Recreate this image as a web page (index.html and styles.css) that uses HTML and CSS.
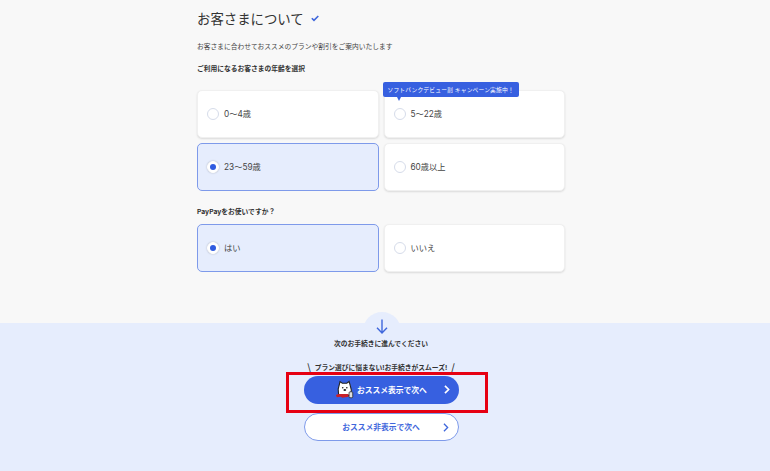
FILE: index.html
```html
<!DOCTYPE html>
<html lang="ja">
<head>
<meta charset="utf-8">
<title>お客さまについて</title>
<link rel="stylesheet" href="styles.css">
</head>
<body>
<main class="page">
  <section class="form">
    <h1 class="title">お客さまについて
      <svg class="title-check" width="8" height="7" viewBox="0 0 8 7"><path d="M.8 3.2 3 5.4 7.3 1" fill="none" stroke="#3f67dc" stroke-width="1.6"/></svg>
    </h1>
    <p class="lead">お客さまに合わせておススメのプランや割引をご案内いたします</p>
    <h2 class="question q-age">ご利用になるお客さまの年齢を選択</h2>
    <div class="options">
      <div class="card"><span class="radio"></span><span class="label">0〜4歳</span></div>
      <div class="card"><span class="radio"></span><span class="label">5〜22歳</span>
        <div class="tip">ソフトバンクデビュー割 キャンペーン実施中！</div>
      </div>
      <div class="card selected"><span class="radio"></span><span class="label">23〜59歳</span></div>
      <div class="card"><span class="radio"></span><span class="label">60歳以上</span></div>
    </div>
    <h2 class="question q-pay">PayPayをお使いですか？</h2>
    <div class="options">
      <div class="card selected"><span class="radio"></span><span class="label">はい</span></div>
      <div class="card"><span class="radio"></span><span class="label">いいえ</span></div>
    </div>
  </section>
  <section class="next">
    <div class="bump">
      <svg width="12" height="15" viewBox="0 0 12 15"><path d="M6 .5V14M1 8.8 6 14 11 8.8" fill="none" stroke="#3f67dc" stroke-width="1.4"/></svg>
    </div>
    <p class="next-text">次のお手続きに進んでください</p>
    <p class="catch"><span class="slash">\</span><span>プラン選びに悩まない!お手続きがスムーズ!</span><span class="slash">/</span></p>
    <a class="btn primary">
      <svg class="dog" width="20" height="20" viewBox="0 0 22 20">
        <path d="M5 3 5.5 .8 8 2.5H13L15.5.5 16.5 4 18 10 17 16H4L3.5 9Z" fill="#fff" stroke="#222" stroke-width="1.2"/>
        <circle cx="8.5" cy="7.5" r=".9" fill="#222"/><circle cx="13" cy="7.5" r=".9" fill="#222"/>
        <ellipse cx="10.8" cy="10" rx="1.5" ry="1" fill="#222"/>
        <path d="M1 15.5 4 14.5H15V17.5L8 18.5 6.5 17.5 2 18Z" fill="#c8202a"/>
        <rect x="15.5" y="12" width="4" height="6.5" rx="1" fill="#ddd" stroke="#222" stroke-width=".8"/>
      </svg>
      <span class="btn-text">おススメ表示で次へ</span>
      <svg class="chev" width="6" height="9" viewBox="0 0 7 11"><path d="M1 1 5.5 5.5 1 10" fill="none" stroke="#fff" stroke-width="2"/></svg>
    </a>
    <a class="btn secondary">
      <span class="btn-text">おススメ非表示で次へ</span>
      <svg class="chev" width="6" height="9" viewBox="0 0 7 11"><path d="M1 1 5.5 5.5 1 10" fill="none" stroke="#3f67dc" stroke-width="1.6"/></svg>
    </a>
    <div class="highlight"></div>
  </section>
</main>
</body>
</html>
```
FILE: styles.css
```css
* { box-sizing: border-box; }
html, body { margin: 0; padding: 0; }
body {
  width: 770px;
  height: 471px;
  overflow: hidden;
  background: #f8f8f8;
  font-family: "Inter", "Noto Sans CJK JP", sans-serif;
  color: #333;
}
.form {
  width: 368px;
  height: 323px;
  margin-left: 197px;
  padding-top: 10px;
}
.title {
  margin: 0;
  font-size: 13.4px;
  line-height: 18px;
  font-weight: 400;
  color: #333;
  display: flex;
  align-items: center;
  gap: 7px;
}
.title-check { margin-top: -1px; }
.lead {
  margin: 13px 0 0;
  font-size: 6.75px;
  line-height: 11px;
  color: #444;
}
.question {
  margin: 0;
  font-size: 6.75px;
  line-height: 11px;
  font-weight: 700;
  color: #333;
}
.q-age { margin-top: 11px; }
.q-pay { margin-top: 15px; }
.options {
  display: grid;
  grid-template-columns: 182px 181px;
  gap: 5px 4.5px;
  width: 368px;
}
.q-age + .options { margin-top: 16px; }
.q-pay + .options { margin-top: 7px; }
.card {
  position: relative;
  height: 48px;
  background: #fff;
  border: 1px solid #f0f0f0;
  border-radius: 5px;
  box-shadow: 0 1px 2px rgba(0,0,0,.12);
  display: flex;
  align-items: center;
  padding-left: 9px;
  gap: 5px;
}
.card.selected {
  background: #e6edfd;
  border-color: #7e9aea;
  box-shadow: none;
}
.radio {
  width: 12px;
  height: 12px;
  border-radius: 50%;
  border: 1.5px solid #d6dcea;
  background: #fff;
  flex: none;
  position: relative;
}
.selected .radio { border-color: #fff; box-shadow: 0 0 2px rgba(0,0,0,.25); }
.selected .radio::after {
  content: "";
  position: absolute;
  inset: 2px;
  border-radius: 50%;
  background: #2f5be0;
}
.label { font-size: 8.25px; line-height: 12px; color: #444; }
.tip {
  position: absolute;
  left: -2px;
  top: -9px;
  width: 136px;
  height: 15px;
  background: #3760e0;
  border-radius: 2px;
  color: #fff;
  font-size: 5.75px;
  letter-spacing: .18px;
  line-height: 15px;
  padding-left: 5px;
  white-space: nowrap;
}
.tip::after {
  content: "";
  position: absolute;
  left: 14px;
  top: 15px;
  border: 2px solid transparent;
  border-top: 4px solid #3760e0;
  border-bottom: 0;
}
.next {
  position: relative;
  height: 148px;
  background: #e6edfd;
  display: flex;
  flex-direction: column;
  align-items: center;
  width: 770px;
  padding-right: 8px;
}
.bump {
  position: absolute;
  left: 363px;
  top: -11px;
  width: 38px;
  height: 38px;
  border-radius: 50%;
  background: #e6edfd;
  display: flex;
  justify-content: center;
  padding-top: 7px;
}
.next-text {
  position: relative;
  margin: 15px 0 0;
  font-size: 6.75px;
  line-height: 11px;
  font-weight: 700;
  color: #333;
}
.catch {
  margin: 13px 0 0;
  font-size: 6.75px;
  line-height: 11px;
  font-weight: 700;
  color: #333;
  display: flex;
  gap: 4px;
}
.slash { font-weight: 400; font-size: 10px; }
.highlight {
  position: absolute;
  left: 286px;
  top: 49px;
  width: 202px;
  height: 41px;
  border: 3px solid #e60012;
}
.btn {
  width: 155px;
  height: 28px;
  border-radius: 14px;
  display: flex;
  align-items: center;
  justify-content: center;
  position: relative;
  font-size: 7.75px;
  font-weight: 700;
  flex: none;
}
.primary { margin-top: 3px; background: #3760e0; color: #fff; }
.secondary {
  margin-top: 9px;
  background: #fff;
  border: 1px solid #7e9aea;
  color: #3f67dc;
}
.dog { position: absolute; left: 31px; top: 4px; }
.primary .btn-text { margin-left: 22px; margin-top: -1px; }
.secondary .btn-text { margin-top: -1px; }
.chev { position: absolute; right: 9px; top: 9px; }
```
